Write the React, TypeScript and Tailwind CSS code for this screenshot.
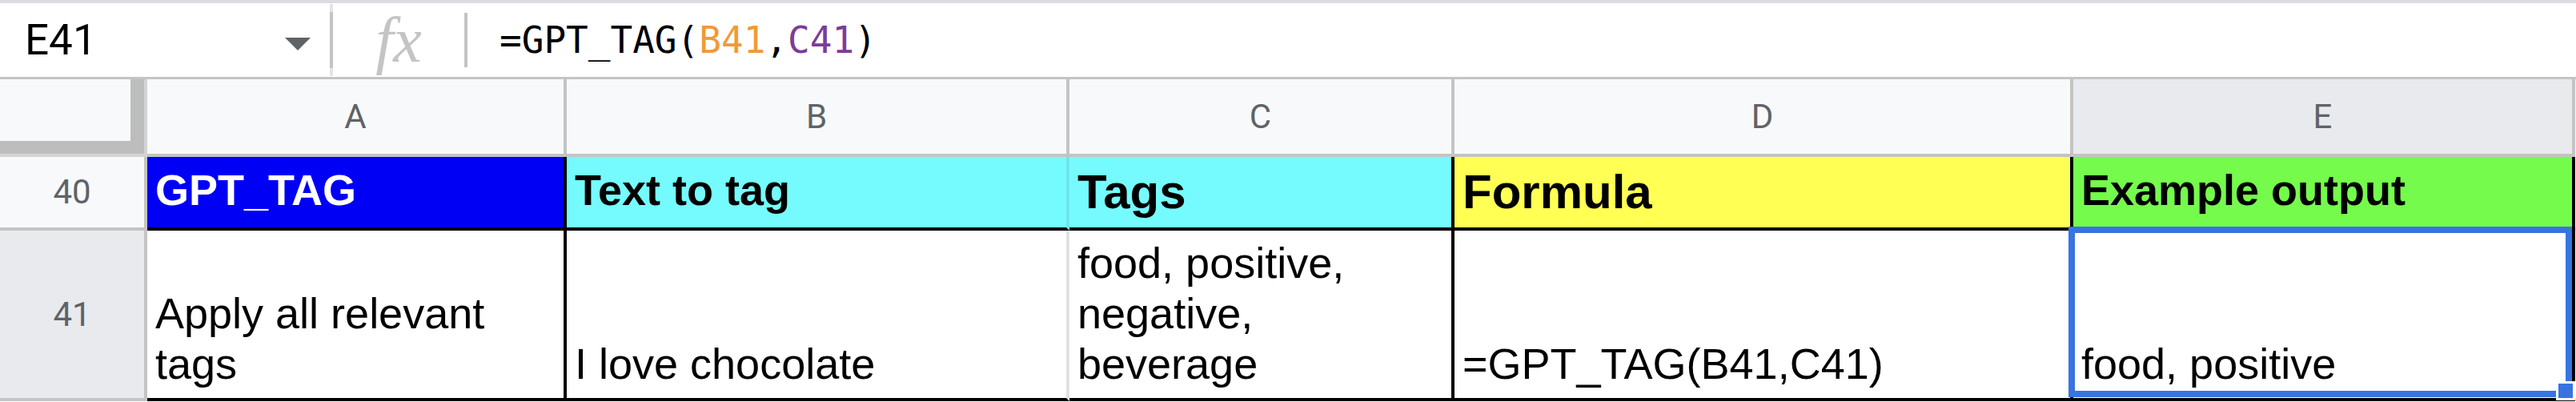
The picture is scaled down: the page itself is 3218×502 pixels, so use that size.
const sans = "font-['Liberation_Sans',Arial,sans-serif]";
const roboto = "font-['Roboto',sans-serif]";

function FormulaBar() {
  return (
    <div className="flex flex-col">
      <div className="h-[4px] bg-[#dadce0]" />
      <div className="flex h-[92px] items-center bg-white">
        <div className="flex h-full w-[412px] items-center pl-[31px] pr-[24px]">
          <span className={`${roboto} text-[53px] leading-none text-black`}>E41</span>
          <svg className="ml-auto mt-[10px]" width="32" height="16" viewBox="0 0 32 16">
            <path d="M0 0h32L16 16z" fill="#5f6368" />
          </svg>
        </div>
        <div className="flex h-[90px] w-[4px] flex-col">
          <div className="h-[10px] bg-[#e4e4e4]" />
          <div className="h-[70px] bg-[#c4c4c4]" />
          <div className="h-[10px] bg-[#e4e4e4]" />
        </div>
        <div className="flex h-full w-[164px] items-center justify-center">
          <span className="font-['Liberation_Serif',serif] text-[80px] italic leading-none text-[#c4c4c4]">
            fx
          </span>
        </div>
        <div className="h-[68px] w-[4px] bg-[#c4c4c4]" />
        <div className="ml-[40px] font-['DejaVu_Sans_Mono',monospace] text-[46px] leading-none text-black">
          =GPT_TAG(<span className="text-[#f09a3a]">B41</span>,
          <span className="text-[#7d3c98]">C41</span>)
        </div>
      </div>
      <div className="h-[3px] bg-[#c4c4c4]" />
    </div>
  );
}

function ColHeader({ label, active }: { label: string; active?: boolean }) {
  return (
    <div
      className={`flex items-center justify-center border-r-4 border-b-4 border-[#c4c4c4] ${
        active ? "bg-[#e8eaed]" : "bg-[#f8f9fa]"
      } ${roboto} text-[42px] leading-none text-[#5f6368]`}
    >
      {label}
    </div>
  );
}

function RowHeader({ label, active }: { label: string; active?: boolean }) {
  return (
    <div
      className={`flex items-center justify-center border-r-4 border-b-4 border-[#c4c4c4] ${
        active ? "bg-[#e8eaed]" : "bg-[#f8f9fa]"
      } ${roboto} text-[42px] leading-none text-[#5f6368]`}
    >
      {label}
    </div>
  );
}

export default function App() {
  return (
    <div className="w-[3218px] h-[502px] overflow-hidden bg-white">
      <FormulaBar />
      <div className="grid grid-cols-[184px_524px_628px_481px_773px_627px_1px] grid-rows-[97px_92px_213px]">
        {/* corner with freeze handles */}
        <div className="flex flex-col border-r-4 border-b-4 border-[#d4d4d4] bg-[#f8f9fa]">
          <div className="flex h-[77px]">
            <div className="w-[163px]" />
            <div className="w-[17px] bg-[#bdbdbd]" />
          </div>
          <div className="h-[16px] bg-[#bdbdbd]" />
        </div>
        <ColHeader label="A" />
        <ColHeader label="B" />
        <ColHeader label="C" />
        <ColHeader label="D" />
        <ColHeader label="E" active />
        <div className="bg-[#f8f9fa]" />

        {/* row 40 */}
        <RowHeader label="40" />
        <div className={`flex items-end border-r-4 border-b-4 border-black bg-[#0000f5] px-[10px] pb-[16px] ${sans} text-[54px] font-bold leading-[62px] text-white`}>
          GPT_TAG
        </div>
        <div className={`flex items-end border-r-4 border-b-4 border-r-[#6fe6ea] border-b-black bg-[#75fbfd] px-[10px] pb-[16px] ${sans} text-[54px] font-bold leading-[62px] text-black`}>
          Text to tag
        </div>
        <div className={`flex items-end border-r-4 border-b-4 border-black bg-[#75fbfd] px-[10px] pb-[10px] ${sans} text-[60px] font-bold leading-[69px] text-black`}>
          Tags
        </div>
        <div className={`flex items-end border-r-4 border-b-4 border-black bg-[#ffff54] px-[10px] pb-[10px] ${sans} text-[60px] font-bold leading-[69px] text-black`}>
          Formula
        </div>
        <div className={`flex items-end border-r-4 border-b-4 border-black bg-[#75fb4c] px-[10px] pb-[16px] ${sans} text-[54px] font-bold leading-[62px] text-black`}>
          Example output
        </div>
        <div className="border-b-4 border-[#e2e2e2]" />

        {/* row 41 */}
        <RowHeader label="41" active />
        <div className={`flex items-end border-r-4 border-b-4 border-black px-[10px] pb-[11px] ${sans} text-[54px] leading-[63px] text-black`}>
          Apply all relevant tags
        </div>
        <div className={`flex items-end border-r-4 border-b-4 border-r-[#e2e2e2] border-b-black px-[10px] pb-[11px] ${sans} text-[54px] leading-[63px] text-black`}>
          I love chocolate
        </div>
        <div className={`flex items-end border-r-4 border-b-4 border-black px-[10px] pb-[11px] ${sans} text-[54px] leading-[63px] text-black`}>
          food, positive, negative, beverage
        </div>
        <div className={`flex items-end border-r-4 border-b-4 border-black px-[10px] pb-[11px] ${sans} text-[54px] leading-[63px] text-black`}>
          =GPT_TAG(B41,C41)
        </div>
        <div className={`relative flex items-end border-r-4 border-b-4 border-black px-[10px] pb-[11px] ${sans} text-[54px] leading-[63px] text-black`}>
          food, positive
          <div className="absolute -left-[6px] -top-[5px] right-0 bottom-[1px] border-[8px] border-[#3874e0]" />
          <div className="absolute -right-[4px] -bottom-[3px] h-[24px] w-[24px] border-[3px] border-white bg-[#3874e0]" />
        </div>
        <div className="border-b-4 border-[#e2e2e2]" />
      </div>
    </div>
  );
}
